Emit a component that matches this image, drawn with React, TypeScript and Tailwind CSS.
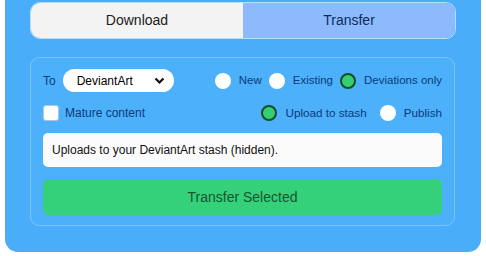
import React, { useState } from "react";

const Radio = ({
  checked,
  label,
  onClick,
  size,
}: {
  checked: boolean;
  label: string;
  onClick: () => void;
  size: string;
}) => (
  <button onClick={onClick} className={`flex items-center gap-[8px] text-[#0d3a78] ${size}`}>
    <span
      className={`w-[16px] h-[16px] rounded-full ${
        checked ? "bg-[#35cf6f] border-[2.5px] border-[#1b4a2c]" : "bg-white"
      }`}
    />
    {label}
  </button>
);

export default function App() {
  const [tab, setTab] = useState<"download" | "transfer">("transfer");
  const [mode, setMode] = useState("deviations");
  const [dest, setDest] = useState("stash");
  const [mature, setMature] = useState(false);

  return (
    <div className="w-[486px] h-[256px] bg-white" style={{ fontFamily: '"Liberation Sans", Arial, sans-serif' }}>
      <div className="mx-[5px] h-[252px] bg-[#4aadfa] rounded-b-[13px] px-[25px] pt-[2px]">
        {/* Tabs */}
        <div className="flex h-[37px] rounded-[10px] overflow-hidden border border-white/60">
          <button
            onClick={() => setTab("download")}
            className={`flex-1 text-[14px] ${tab === "download" ? "bg-[#8cbafc] text-[#0d2a5c]" : "bg-[#f3f3f3] text-[#1b1b1b]"}`}
          >
            Download
          </button>
          <button
            onClick={() => setTab("transfer")}
            className={`flex-1 text-[14px] ${tab === "transfer" ? "bg-[#8cbafc] text-[#0d2a5c]" : "bg-[#f3f3f3] text-[#1b1b1b]"}`}
          >
            Transfer
          </button>
        </div>

        {/* Transfer card */}
        <div className="mt-[18px] w-[425px] h-[169px] rounded-[9px] border border-white/25 bg-[#4cb0fb] px-[12px] pt-[11px] flex flex-col gap-[12px]">
          <div className="h-[23px] flex items-center justify-between">
            <div className="flex items-center gap-[7px]">
              <span className="text-[12px] text-[#0d3a78]">To</span>
              <div className="w-[111px] h-[23px] bg-white rounded-full flex items-center justify-between pl-[14px] pr-[9px] text-[12px] text-black">
                DeviantArt
                <svg width="11" height="8" viewBox="0 0 11 8">
                  <path d="M1.5 1.5 L5.5 5.5 L9.5 1.5" fill="none" stroke="#111" strokeWidth="2.2" />
                </svg>
              </div>
            </div>
            <div className="flex items-center gap-[7px]">
              <Radio size="text-[11.5px]" checked={mode === "new"} label="New" onClick={() => setMode("new")} />
              <Radio size="text-[11.5px]" checked={mode === "existing"} label="Existing" onClick={() => setMode("existing")} />
              <Radio size="text-[11.5px]" checked={mode === "deviations"} label="Deviations only" onClick={() => setMode("deviations")} />
            </div>
          </div>

          <div className="h-[17px] flex items-center justify-between">
            <button onClick={() => setMature(!mature)} className="flex items-center gap-[6px] text-[12px] text-[#0d3a78]">
              <span className="w-[16px] h-[16px] bg-white rounded-[3px] border border-[#b8c4d2]">
                {mature && (
                  <svg width="14" height="14" viewBox="0 0 14 14">
                    <path d="M3 7 L6 10 L11 4" fill="none" stroke="#0d3a78" strokeWidth="2" />
                  </svg>
                )}
              </span>
              Mature content
            </button>
            <div className="flex items-center gap-[13px]">
              <Radio size="text-[11.7px]" checked={dest === "stash"} label="Upload to stash" onClick={() => setDest("stash")} />
              <Radio size="text-[11.7px]" checked={dest === "publish"} label="Publish" onClick={() => setDest("publish")} />
            </div>
          </div>

          <div className="h-[34px] bg-[#fbfbfb] rounded-[5px] flex items-center px-[9px] text-[12px] text-[#111]">
            Uploads to your DeviantArt stash (hidden).
          </div>

          <button className="h-[36px] bg-[#34d17a] rounded-[6px] text-[14px] text-[#17552f]">
            Transfer Selected
          </button>
        </div>
      </div>
    </div>
  );
}
